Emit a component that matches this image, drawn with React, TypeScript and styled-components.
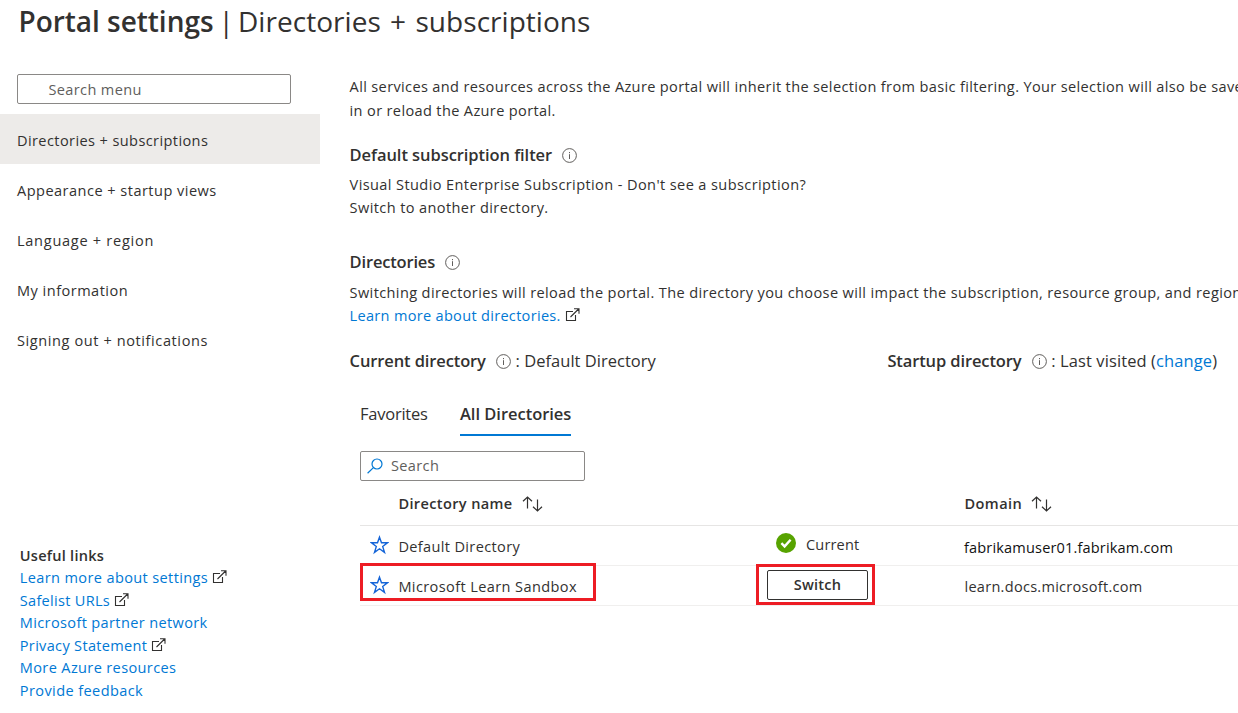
import React from 'react';
import styled, { createGlobalStyle } from 'styled-components';

const GlobalStyle = createGlobalStyle`
  html, body { margin: 0; padding: 0; background: #fff; }
  body {
    font-family: "Open Sans", "Noto Sans", sans-serif;
    font-size: 14.55px;
    color: #323130;
    overflow: hidden;
  }
  * { box-sizing: border-box; }
`;

const Page = styled.div`
  width: 1238px;
  height: 713px;
  overflow: hidden;
  display: flex;
  flex-direction: column;
  white-space: nowrap;
`;

const Title = styled.h1`
  margin: 0;
  padding-left: 18.5px;
  height: 74px;
  font-size: 28px;
  line-height: 43px;
  font-weight: 400;
  display: flex;
`;
const TitleStrong = styled.strong`
  font-weight: 600;
  letter-spacing: -0.03px;
  width: 200px;
`;
const TitleBar = styled.span`
  width: 19.5px;
`;
const TitleRest = styled.span`
  letter-spacing: 0.04px;
  word-spacing: 2px;
`;

const Columns = styled.div`
  display: flex;
  flex: 1;
  min-height: 0;
`;

const Sidebar = styled.aside`
  width: 320px;
  flex: none;
  display: flex;
  flex-direction: column;
`;

const MenuSearch = styled.div`
  margin: 0 29px 10px 17px;
  height: 30px;
  border: 1px solid #8a8886;
  border-radius: 2px;
  padding: 0 0 0 30.5px;
  line-height: 28px;
  letter-spacing: 0.36px;
  color: #605e5c;
`;

const NavItem = styled.a<{ $active?: boolean; $spacing: number }>`
  height: 50px;
  padding: 1px 0 0 17px;
  line-height: 50px;
  letter-spacing: ${(p) => p.$spacing}px;
  background: ${(p) => (p.$active ? '#edebe9' : 'transparent')};
`;

const Links = styled.div`
  margin: auto 0 12px 19.8px;
  display: flex;
  flex-direction: column;
  line-height: 22.5px;
`;
const LinksTitle = styled.div`
  font-weight: 600;
  letter-spacing: 0.24px;
`;
const Link = styled.a<{ $spacing?: number }>`
  color: #0078d4;
  letter-spacing: ${(p) => p.$spacing ?? 0.36}px;
  svg { margin-left: 4px; vertical-align: -1px; }
`;

const Main = styled.main`
  flex: 1;
  min-width: 0;
  padding-left: 29.6px;
  display: flex;
  flex-direction: column;
  overflow: hidden;
`;

const Paragraph = styled.p<{ $line: number; $after: number; $spacing: number }>`
  margin: 0 0 ${(p) => p.$after}px;
  line-height: ${(p) => p.$line}px;
  letter-spacing: ${(p) => p.$spacing}px;
`;

const Heading = styled.h2<{ $after: number; $spacing: number }>`
  margin: 0 0 ${(p) => p.$after}px;
  height: 22px;
  line-height: 22px;
  font-size: 16.49px;
  font-weight: 600;
  letter-spacing: ${(p) => p.$spacing}px;
  display: flex;
  align-items: center;
  svg { margin: 1px 0 0 10px; }
`;

const Summary = styled.div`
  display: flex;
  height: 22px;
  margin-bottom: 30px;
  line-height: 22px;
  font-size: 16.49px;
`;
const SummaryItem = styled.div<{ $width?: number; $spacing: number }>`
  width: ${(p) => (p.$width ? `${p.$width}px` : 'auto')};
  display: flex;
  align-items: center;
  letter-spacing: ${(p) => p.$spacing}px;
  strong { font-weight: 600; letter-spacing: -0.11px; }
  svg { margin: 1px 4.6px 0 10.2px; }
  a { color: #0078d4; }
`;

const Tabs = styled.div`
  display: flex;
  gap: 32px;
  height: 34px;
  margin: 0 0 15px 10.4px;
  font-size: 16.49px;
`;
const Tab = styled.div<{ $active?: boolean; $width: number }>`
  width: ${(p) => p.$width}px;
  line-height: 23px;
  letter-spacing: ${(p) => (p.$active ? -0.02 : -0.23)}px;
  font-weight: ${(p) => (p.$active ? 600 : 400)};
  border-bottom: 2px solid ${(p) => (p.$active ? '#0078d4' : 'transparent')};
`;

const DirectorySearch = styled.div`
  margin-left: 10.4px;
  width: 225px;
  height: 30px;
  border: 1px solid #8a8886;
  border-radius: 2px;
  display: flex;
  align-items: center;
  padding: 0 0 2px 6px;
  gap: 8px;
  letter-spacing: 0.35px;
  color: #605e5c;
  svg { margin-top: 2px; }
`;

const Table = styled.div`
  margin-left: 10.4px;
  display: flex;
  flex-direction: column;
`;
const TableRow = styled.div<{ $header?: boolean }>`
  display: grid;
  grid-template-columns: 396px 208px 1fr;
  height: ${(p) => (p.$header ? 45 : 40)}px;
  border-bottom: 1px solid ${(p) => (p.$header ? '#e6e5e4' : '#f0efee')};
`;
const Cell = styled.div<{ $indent?: number; $shift?: number; $spacing?: number }>`
  position: relative;
  display: flex;
  align-items: center;
  padding-left: ${(p) => p.$indent ?? 0}px;
  padding-top: ${(p) => p.$shift ?? 0}px;
  letter-spacing: ${(p) => p.$spacing ?? 0.35}px;
`;
const HeaderCell = styled(Cell)`
  font-weight: 600;
  svg { margin: 1px 0 0 9.2px; }
`;
const StarSlot = styled.span`
  display: flex;
  width: 28.4px;
  margin-top: -2px;
`;
const StatusGroup = styled.div`
  display: flex;
  align-items: center;
  margin-bottom: 5px;
`;
const StatusText = styled.span`
  margin: 2px 0 0 10px;
  letter-spacing: 0.16px;
`;
const DarkText = styled.span`
  color: #111;
`;
const SwitchButton = styled.button`
  width: 101px;
  height: 30px;
  margin-bottom: 1px;
  border: 1px solid #323130;
  border-radius: 2px;
  background: #fff;
  color: #323130;
  padding: 0 0 2px 0;
  font: 600 14.55px "Open Sans", sans-serif;
  letter-spacing: 0.22px;
`;
const Highlight = styled.div<{ $left: number; $top: number; $w: number; $h: number }>`
  position: absolute;
  left: ${(p) => p.$left}px;
  top: ${(p) => p.$top}px;
  width: ${(p) => p.$w}px;
  height: ${(p) => p.$h}px;
  border: 3px solid #ed1c24;
  pointer-events: none;
`;

const InfoIcon = () => (
  <svg width="15" height="15" viewBox="0 0 15 15" fill="none" stroke="#605e5c">
    <circle cx="7.5" cy="7.5" r="6.9" />
    <path d="M7.5 6.2v4.8M7.5 4v1.2" />
  </svg>
);

const ExternalIcon = () => (
  <svg width="15" height="14" viewBox="0 0 15 14" fill="none" stroke="#323130" strokeWidth="1.1">
    <path d="M8 3.5H1.5v9h9V7M5.5 9L13.6 1M9 .8h5v5" />
  </svg>
);

const SortIcon = () => (
  <svg width="21" height="16" viewBox="0 0 21 16" fill="none" stroke="#323130" strokeWidth="1.2">
    <path d="M5.5 12.5V1M1 5.3L5.5 1 10 5.3M15.5 3.5V15M11 10.7l4.5 4.3 4.5-4.3" />
  </svg>
);

const StarIcon = () => (
  <svg width="19" height="20" viewBox="0 0 19 20" fill="none" stroke="#1565d8" strokeWidth="1.4">
    <path d="M9.5 2.2l2 5.6h5.9l-4.7 3.6 1.8 6-5-3.6-5 3.6 1.8-6L1.6 7.8h5.9z" />
  </svg>
);

const SearchIcon = () => (
  <svg width="16" height="16" viewBox="0 0 16 16" fill="none" stroke="#0078d4" strokeWidth="1.2">
    <circle cx="10" cy="6" r="5" />
    <path d="M6.4 9.6L.6 15.2" />
  </svg>
);

const CheckIcon = () => (
  <svg width="20" height="20" viewBox="0 0 20 20">
    <circle cx="10" cy="10" r="10" fill="#57a300" />
    <path d="M5.4 10.2l3.2 3.2 6-6.6" fill="none" stroke="#fff" strokeWidth="2.4" />
  </svg>
);

export default function App() {
  return (
    <Page>
      <GlobalStyle />
      <Title>
        <TitleStrong>Portal settings</TitleStrong>
        <TitleBar>|</TitleBar>
        <TitleRest>Directories + subscriptions</TitleRest>
      </Title>
      <Columns>
        <Sidebar>
          <MenuSearch>Search menu</MenuSearch>
          <NavItem $active $spacing={0.4}>Directories + subscriptions</NavItem>
          <NavItem $spacing={0.47}>Appearance + startup views</NavItem>
          <NavItem $spacing={0.72}>Language + region</NavItem>
          <NavItem $spacing={0.48}>My information</NavItem>
          <NavItem $spacing={0.59}>Signing out + notifications</NavItem>
          <Links>
            <LinksTitle>Useful links</LinksTitle>
            <Link $spacing={0.367}>Learn more about settings<ExternalIcon /></Link>
            <Link $spacing={0.288}>Safelist URLs<ExternalIcon /></Link>
            <Link>Microsoft partner network</Link>
            <Link $spacing={0.318}>Privacy Statement<ExternalIcon /></Link>
            <Link>More Azure resources</Link>
            <Link $spacing={0.4}>Provide feedback</Link>
          </Links>
        </Sidebar>
        <Main>
          <Paragraph $line={24} $after={22} $spacing={0.355}>
            All services and resources across the Azure portal will inherit the selection from basic filtering. Your selection will also be saved
            <br />
            in or reload the Azure portal.
          </Paragraph>
          <Heading $after={7} $spacing={-0.06}>Default subscription filter<InfoIcon /></Heading>
          <Paragraph $line={23} $after={32} $spacing={0.395}>
            Visual Studio Enterprise Subscription - Don't see a subscription?
            <br />
            Switch to another directory.
          </Paragraph>
          <Heading $after={8} $spacing={-0.17}>Directories<InfoIcon /></Heading>
          <Paragraph $line={23} $after={23} $spacing={0.375}>
            Switching directories will reload the portal. The directory you choose will impact the subscription, resource group, and region
            <br />
            <Link $spacing={0.303}>Learn more about directories.<ExternalIcon /></Link>
          </Paragraph>
          <Summary>
            <SummaryItem $width={537.8} $spacing={0.02}>
              <strong>Current directory</strong><InfoIcon />: Default Directory
            </SummaryItem>
            <SummaryItem $spacing={0.1}>
              <strong>Startup directory</strong><InfoIcon /><span>: Last visited (<a>change</a>)</span>
            </SummaryItem>
          </Summary>
          <Tabs>
            <Tab $width={68}>Favorites</Tab>
            <Tab $active $width={111}>All Directories</Tab>
          </Tabs>
          <DirectorySearch><SearchIcon />Search</DirectorySearch>
          <Table>
            <TableRow $header>
              <HeaderCell $indent={38.4} $spacing={0.37}>Directory name<SortIcon /></HeaderCell>
              <HeaderCell />
              <HeaderCell $indent={0.5} $spacing={0.417}>Domain<SortIcon /></HeaderCell>
            </TableRow>
            <TableRow>
              <Cell $indent={10} $shift={1}><StarSlot><StarIcon /></StarSlot>Default Directory</Cell>
              <Cell $indent={20}>
                <StatusGroup><CheckIcon /><StatusText>Current</StatusText></StatusGroup>
              </Cell>
              <Cell $shift={3} $spacing={0.16}><DarkText>fabrikamuser01.fabrikam.com</DarkText></Cell>
            </TableRow>
            <TableRow>
              <Cell $indent={10} $shift={1} $spacing={0.39}>
                <StarSlot><StarIcon /></StarSlot>Microsoft Learn Sandbox
                <Highlight $left={0} $top={-3} $w={236} $h={38} />
              </Cell>
              <Cell $indent={11}>
                <SwitchButton>Switch</SwitchButton>
                <Highlight $left={0} $top={-2} $w={119} $h={41} />
              </Cell>
              <Cell $indent={0.5} $shift={1} $spacing={0.27}>learn.docs.microsoft.com</Cell>
            </TableRow>
          </Table>
        </Main>
      </Columns>
    </Page>
  );
}
